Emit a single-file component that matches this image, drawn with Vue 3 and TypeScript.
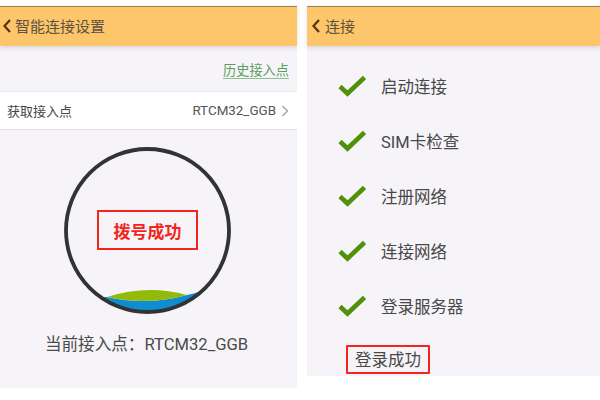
<script setup lang="ts">
const steps: string[] = ['启动连接', 'SIM卡检查', '注册网络', '连接网络', '登录服务器']
</script>

<template>
  <div class="page">
    <section class="panel left">
      <header class="bar">
        <svg class="back" width="10" height="16" viewBox="0 0 10 16"><path d="M8 2L2.5 8L8 14" fill="none" stroke="#5a3208" stroke-width="2.2" /></svg>
        <span>智能连接设置</span>
      </header>
      <div class="history"><span class="link">历史接入点</span></div>
      <div class="row">
        <span>获取接入点</span>
        <span class="value">RTCM32_GGB
          <svg width="8" height="14" viewBox="0 0 8 14"><path d="M1.5 2L6.5 7L1.5 12" fill="none" stroke="#9a9a9a" stroke-width="1.2" /></svg>
        </span>
      </div>
      <div class="dial">
        <div class="gauge">
          <svg width="169" height="169" viewBox="0 0 169 169">
            <defs><clipPath id="inner"><circle cx="84.5" cy="84.5" r="81" /></clipPath></defs>
            <g clip-path="url(#inner)">
              <path d="M36 151L44 151Q84 160 124 149Q130 148 142 144L142 170L30 170Z" fill="#0e8ed0" />
              <path d="M44 151Q84 138 124 149Q84 160 44 151Z" fill="#93b90b" />
            </g>
            <circle cx="84.5" cy="84.5" r="81.5" fill="none" stroke="#333" stroke-width="3.8" />
          </svg>
          <div class="status">拨号成功</div>
        </div>
        <p class="current">当前接入点：RTCM32_GGB</p>
      </div>
    </section>
    <section class="panel right">
      <header class="bar">
        <svg class="back" width="10" height="16" viewBox="0 0 10 16"><path d="M8 2L2.5 8L8 14" fill="none" stroke="#5a3208" stroke-width="2.2" /></svg>
        <span>连接</span>
      </header>
      <ul class="steps">
        <li v-for="s in steps" :key="s" class="step">
          <svg width="28" height="22" viewBox="0 0 28 22"><path d="M2 11.5L9.5 18.5L26.5 2.5" fill="none" stroke="#4f9208" stroke-width="4.6" /></svg>
          <span>{{ s }}</span>
        </li>
      </ul>
      <div class="done"><span>登录成功</span></div>
    </section>
  </div>
</template>

<style scoped>
.page {
  display: flex;
  gap: 10px;
  align-items: flex-start;
  padding-top: 6px;
  width: 600px;
  height: 394px;
  background: #fff;
  font-family: "Noto Sans CJK SC", "Noto Sans", sans-serif;
  color: #444;
}
.panel {
  background: #f6f4f9;
  display: flex;
  flex-direction: column;
}
.left { width: 297px; height: 382px; }
.right { width: 293px; height: 370px; }
.bar {
  height: 40px;
  flex: none;
  box-sizing: border-box;
  border-top: 1px solid #96804a;
  background: #fdc66b;
  box-shadow: 0 2px 5px rgba(0, 0, 0, 0.12);
  display: flex;
  align-items: center;
  gap: 3px;
  padding: 0 0 2px 2px;
  font-size: 15px;
  color: #5d5240;
}
.right .bar { padding-left: 4px; gap: 4px; }
.history {
  height: 45px;
  flex: none;
  box-sizing: border-box;
  padding: 4px 8px 0 0;
  display: flex;
  align-items: center;
  justify-content: flex-end;
}
.link {
  font-size: 13.2px;
  line-height: 16px;
  color: #5aa05a;
  border-bottom: 1px solid #8cc08c;
}
.row {
  height: 39px;
  flex: none;
  box-sizing: border-box;
  background: #fff;
  border-top: 1px solid #ececec;
  border-bottom: 1px solid #e4e4e4;
  display: flex;
  align-items: center;
  justify-content: space-between;
  padding: 0 8px 0 7px;
  font-size: 13px;
}
.value { display: flex; align-items: center; gap: 5px; font-family: Roboto, "Noto Sans", sans-serif; font-size: 13.4px; color: #555; }
.dial {
  display: flex;
  flex-direction: column;
  align-items: center;
  padding-top: 16px;
}
.gauge { position: relative; width: 169px; height: 169px; margin-left: -2px; }
.gauge svg { display: block; }
.status {
  position: absolute;
  left: 34px;
  top: 64px;
  width: 101px;
  height: 40px;
  box-sizing: border-box;
  border: 2px solid #f2261c;
  display: flex;
  align-items: center;
  justify-content: center;
  color: #f2261c;
  font-size: 17px;
  font-weight: 700;
}
.current {
  margin: 18px 0 0 -4px;
  font-size: 16.6px;
  line-height: 24px;
  font-family: Roboto, "Noto Sans CJK SC", sans-serif;
  color: #4a4a4a;
}
.steps {
  list-style: none;
  margin: 0;
  padding: 25px 0 0 31px;
  display: flex;
  flex-direction: column;
  gap: 25px;
}
.step {
  height: 30px;
  display: flex;
  align-items: center;
  gap: 15px;
  font-size: 16.5px;
  font-family: Roboto, "Noto Sans CJK SC", sans-serif;
  color: #484848;
}
.done { padding: 24px 0 0 39px; }
.done span {
  display: inline-block;
  box-sizing: border-box;
  width: 84px;
  height: 29px;
  line-height: 25px;
  border: 2px solid #f2261c;
  border-radius: 1px;
  text-align: center;
  font-size: 16.5px;
  color: #484848;
}
</style>

<style>
html, body { margin: 0; background: #fff; }
</style>
